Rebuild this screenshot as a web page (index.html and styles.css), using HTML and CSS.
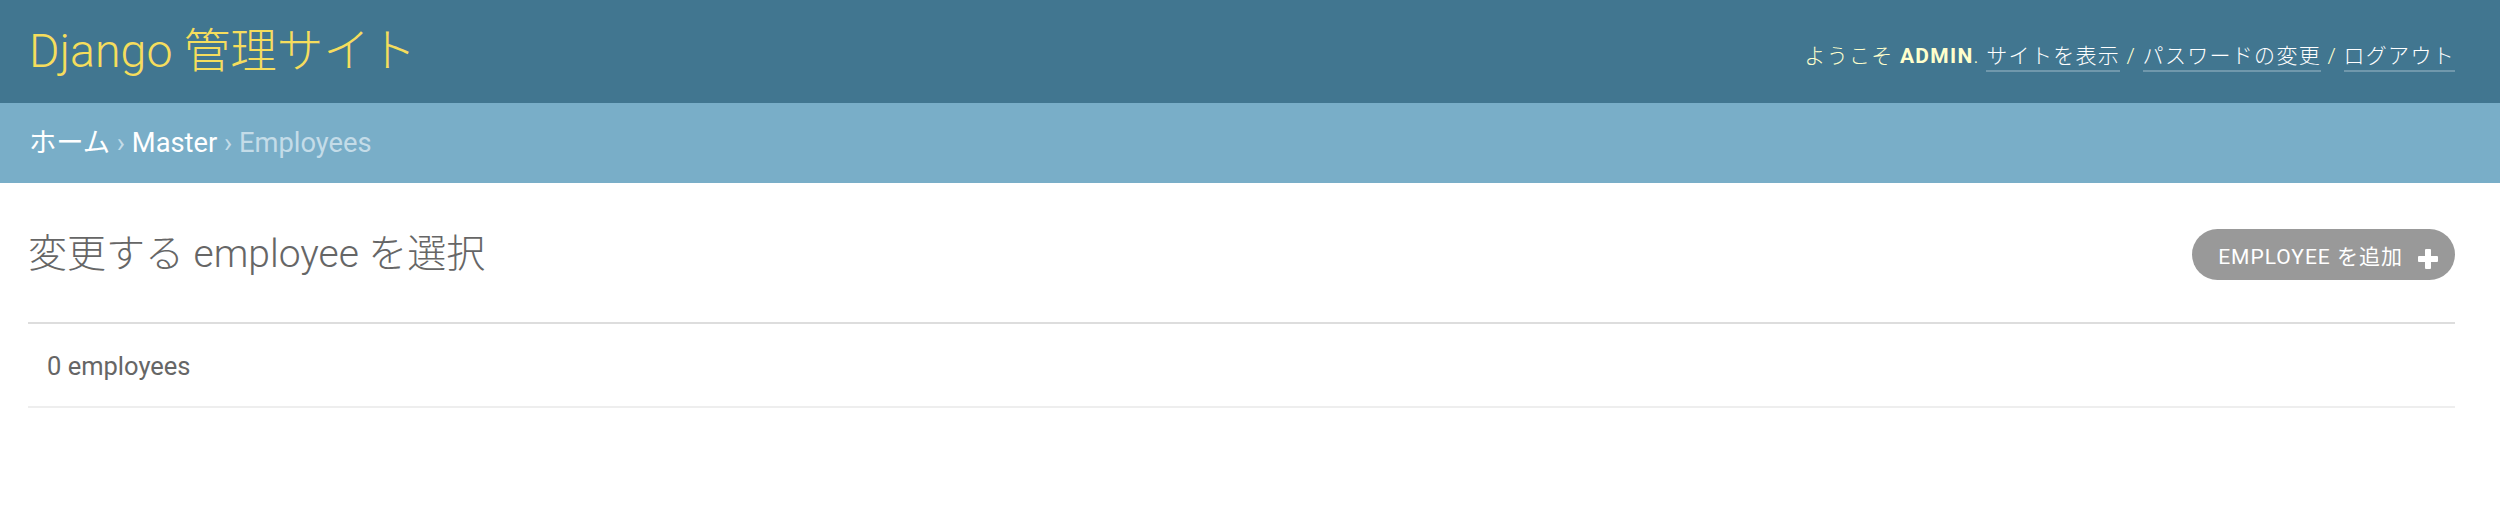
FILE: index.html
```html
<!DOCTYPE html>
<html lang="ja">
<head>
<meta charset="utf-8">
<title>変更する employee を選択 | Django 管理サイト</title>
<link rel="stylesheet" href="styles.css">
</head>
<body>
<header class="site-header">
  <h1 class="branding">Django 管理サイト</h1>
  <div class="user-tools">ようこそ <strong>admin</strong>. <a href="#">サイトを表示</a> / <a href="#">パスワードの変更</a> / <a href="#">ログアウト</a></div>
</header>
<nav class="breadcrumbs"><a href="#">ホーム</a> › <a href="#">Master</a> › Employees</nav>
<main class="content">
  <div class="title-row">
    <h1 class="page-title">変更する employee を選択</h1>
    <a class="addlink" href="#"><span>Employee を追加</span><svg class="plus" width="20" height="20" viewBox="0 0 20 20"><rect x="7" y="0" width="6" height="20" rx="1" fill="#fff"/><rect x="0" y="7" width="20" height="6" rx="1" fill="#fff"/></svg></a>
  </div>
  <p class="paginator">0 employees</p>
</main>
</body>
</html>
```
FILE: styles.css
```css
html, body {
  margin: 0;
  padding: 0;
  background: #fff;
  font-family: Roboto, "Noto Sans CJK JP", sans-serif;
}

a { text-decoration: none; }

.site-header {
  height: 103px;
  box-sizing: border-box;
  background: #417690;
  display: flex;
  align-items: center;
  justify-content: space-between;
  padding: 0 45px 0 29px;
}

.branding {
  margin: 0;
  font-size: 46.5px;
  font-weight: 300;
  color: #f5dd5d;
  line-height: 1.2;
}

.user-tools {
  font-size: 21px;
  font-weight: 300;
  letter-spacing: 1.3px;
  color: #ffc;
  margin-top: 4px;
}

.user-tools strong {
  font-weight: 700;
  text-transform: uppercase;
}

.user-tools a {
  color: #fff;
  border-bottom: 2px solid rgba(255, 255, 255, 0.25);
  padding-bottom: 2px;
}

.breadcrumbs {
  height: 80px;
  box-sizing: border-box;
  background: #79aec8;
  padding: 0 29px;
  font-size: 27.3px;
  line-height: 80px;
  color: #c4dce8;
}

.breadcrumbs a { color: #fff; }

.content {
  padding: 0 45px 0 28px;
}

.title-row {
  display: flex;
  justify-content: space-between;
  align-items: center;
  margin-top: 46px;
  height: 51px;
}

.page-title {
  margin: 0;
  font-size: 39px;
  font-weight: 300;
  color: #666;
  line-height: 51px;
}

.addlink {
  display: flex;
  align-items: center;
  height: 51px;
  box-sizing: border-box;
  padding: 0 17px 0 26px;
  border-radius: 26px;
  background: #999;
  color: #fff;
  font-size: 21px;
  letter-spacing: 1px;
  text-transform: uppercase;
}

.plus {
  margin-left: 15px;
  margin-top: 8px;
}

.paginator {
  margin: 42px 0 0;
  border-top: 2px solid #ddd;
  border-bottom: 2px solid #eee;
  height: 86px;
  box-sizing: border-box;
  padding: 0 0 0 19px;
  font-size: 25.5px;
  line-height: 84px;
  color: #666;
}
```
